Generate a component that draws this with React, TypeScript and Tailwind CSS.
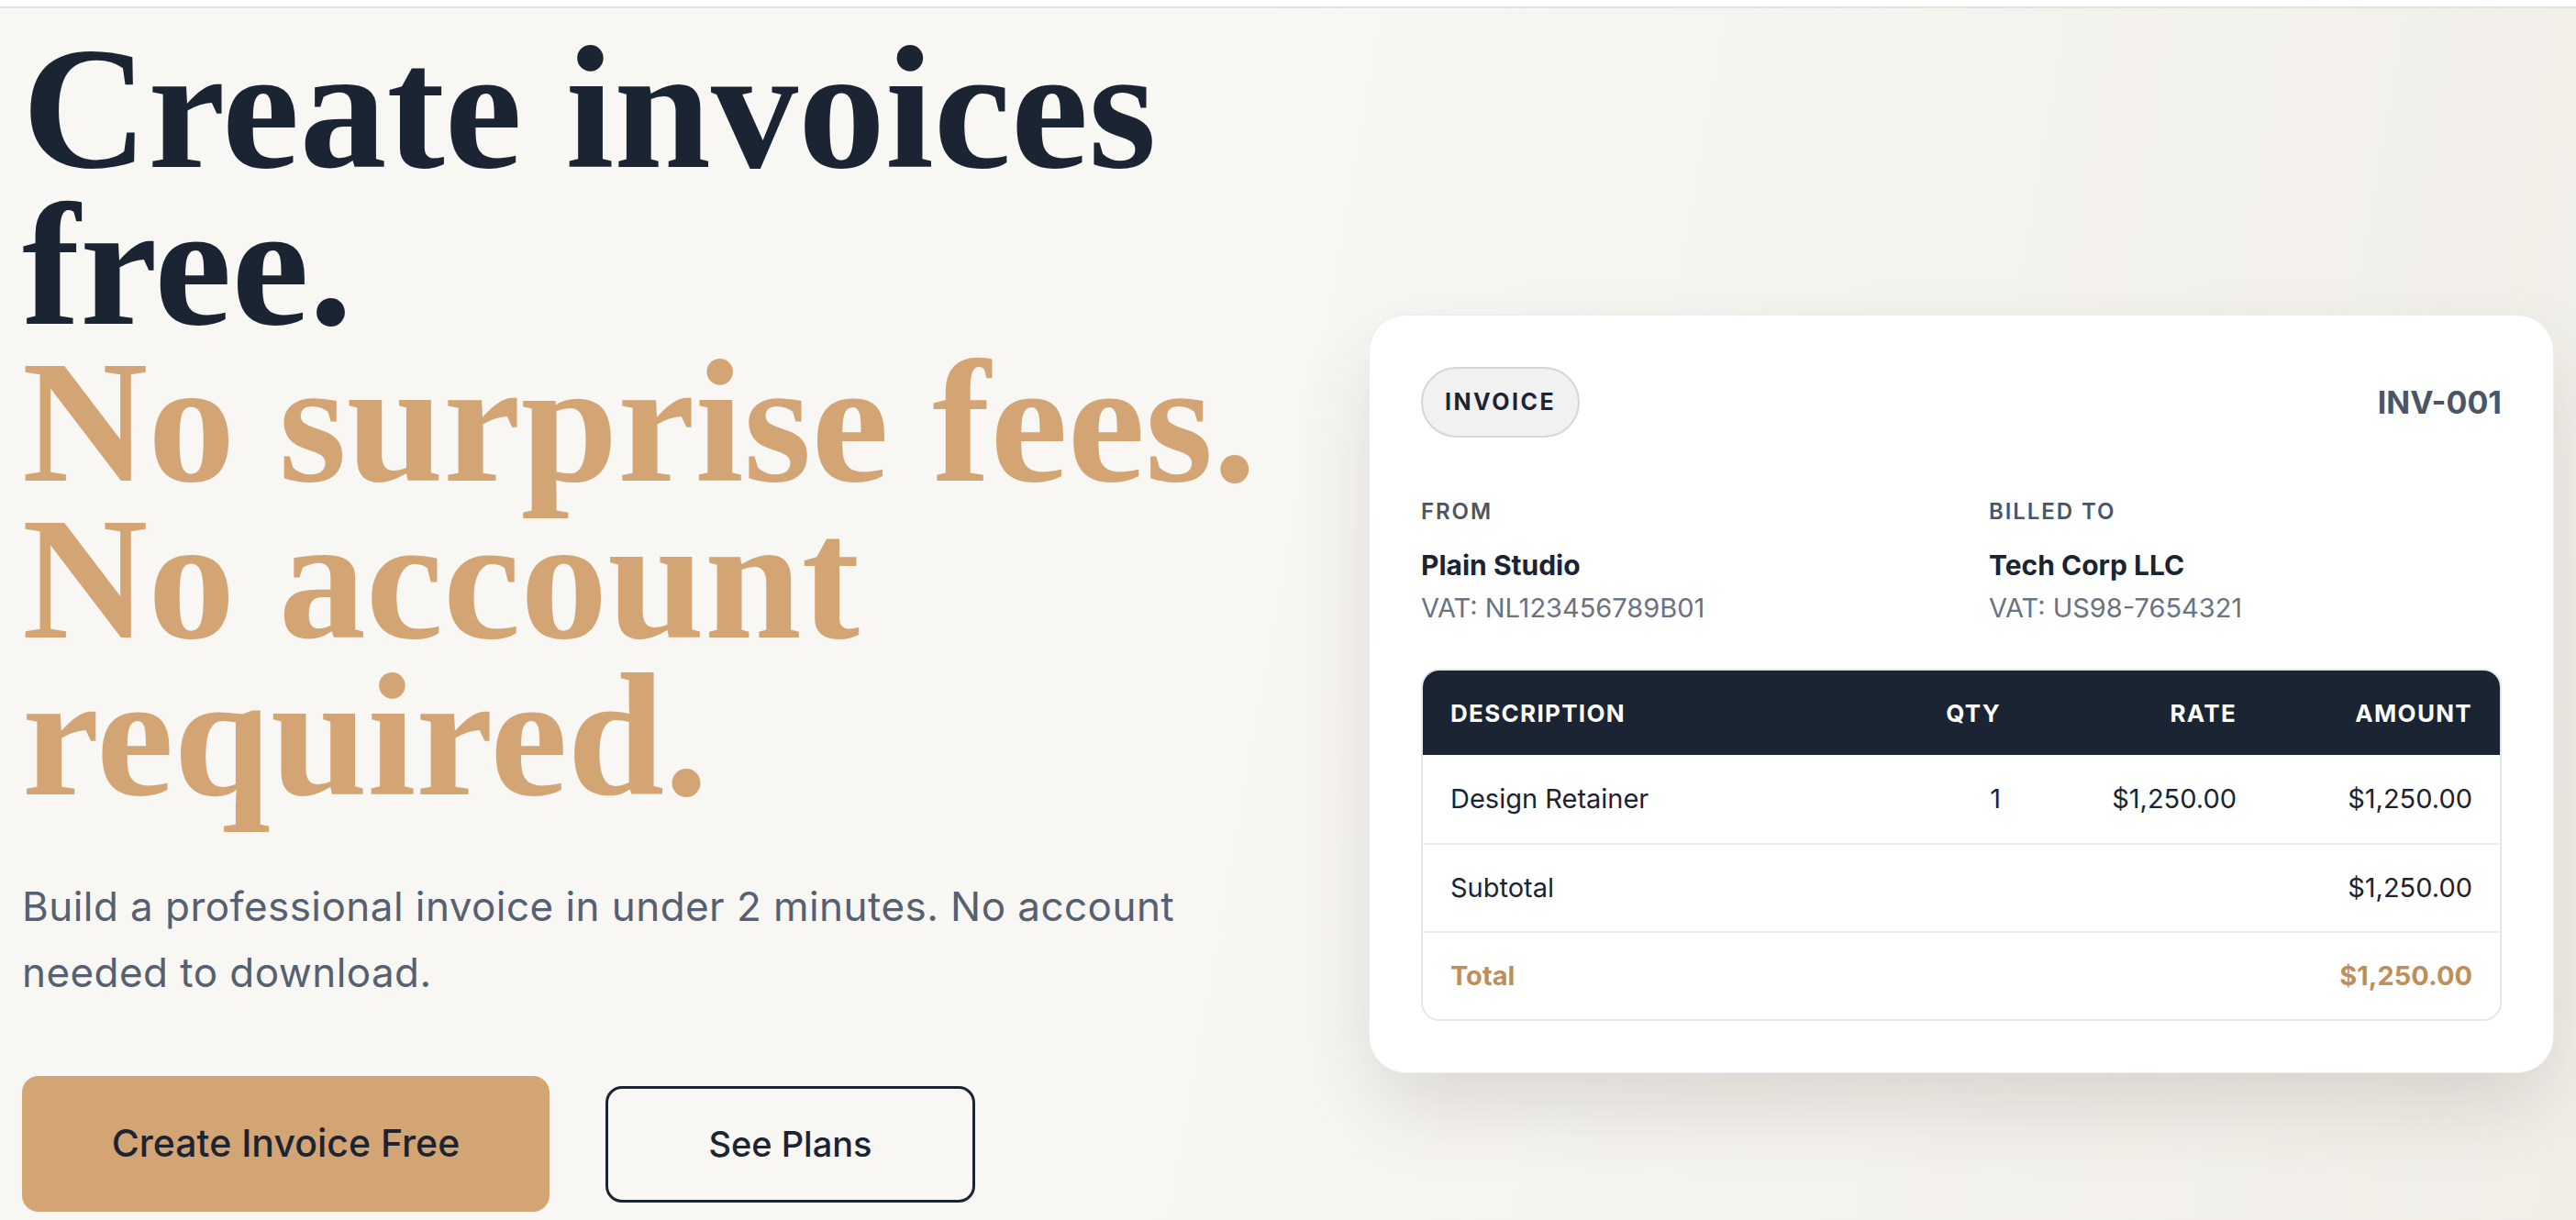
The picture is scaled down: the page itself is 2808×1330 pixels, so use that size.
import React from "react";

const sans = { fontFamily: "Inter, 'Noto Sans', sans-serif" } as const;

function Row({
  cells,
  bold,
  gold,
  border,
}: {
  cells: string[];
  bold?: boolean;
  gold?: boolean;
  border?: boolean;
}) {
  const color = gold ? "text-[#bf8f5a]" : "text-[#1b2433]";
  const weight = bold ? "font-bold" : "font-normal";
  return (
    <div
      className={`grid h-[96px] grid-cols-[1fr_180px_257px_257px] items-center text-[29px] ${color} ${weight} ${
        border ? "border-t-2 border-[#ececec]" : ""
      }`}
    >
      <div className="pl-[30px]">{cells[0]}</div>
      <div className="pr-[30px] text-right">{cells[1]}</div>
      <div className="pr-[30px] text-right">{cells[2]}</div>
      <div className="pr-[30px] text-right">{cells[3]}</div>
    </div>
  );
}

export default function App() {
  return (
    <div
      className="min-h-[1330px] w-full bg-[linear-gradient(100deg,#f8f7f4_45%,#f1eee8_100%)]"
      style={sans}
    >
      <div className="h-[9px] border-b-2 border-[#e3e3dd] bg-white" />
      <div className="flex items-start px-6 pt-6">
        {/* Left column */}
        <div className="flex-1">
          <h1
            className="text-[190px] font-bold leading-[171px] text-[#1b2433]"
            style={{ fontFamily: "'Liberation Serif', 'Times New Roman', serif" }}
          >
            Create invoices
            <br />
            free.
            <br />
            <span className="text-[#d4a574]">
              No surprise fees.
              <br />
              No account
              <br />
              required.
            </span>
          </h1>
          <p className="mt-[64px] text-[44px] leading-[72px] tracking-[0.01em] text-[#556070]">
            Build a professional invoice in under 2 minutes. No account
            <br />
            needed to download.
          </p>
          <div className="mt-[77px] flex items-center gap-[61px]">
            <button className="flex h-[148px] w-[575px] items-center justify-center rounded-[18px] bg-[#d4a574] text-[41px] font-medium text-[#1b2433]">
              Create Invoice Free
            </button>
            <button className="flex h-[127px] w-[403px] items-center justify-center rounded-[18px] border-[3px] border-[#1b2433] text-[38px] font-medium text-[#1b2433]">
              See Plans
            </button>
          </div>
        </div>

        {/* Invoice card */}
        <div className="mt-[310px] w-[1292px] shrink-0 rounded-[40px] border border-[#ececec] bg-white p-14 shadow-[0_40px_90px_-10px_rgba(60,50,40,0.16)]">
          <div className="flex items-center justify-between">
            <div className="flex h-[77px] items-center rounded-full border-2 border-[#d6d6da] bg-[#f1f1f1] px-6 text-[25px] font-bold tracking-[0.1em] text-[#1b2433]">
              INVOICE
            </div>
            <div className="text-[34px] font-bold text-[#4b5563]">INV-001</div>
          </div>

          <div className="mt-[65px] grid grid-cols-2 gap-x-[60px]">
            <div>
              <div className="text-[24px] font-semibold leading-[32px] tracking-[0.08em] text-[#4b5563]">
                FROM
              </div>
              <div className="mt-[22px] text-[30px] font-bold leading-[40px] text-[#1b2433]">
                Plain Studio
              </div>
              <div className="mt-[7px] text-[29px] leading-[40px] text-[#6b7280]">
                VAT: NL123456789B01
              </div>
            </div>
            <div>
              <div className="text-[24px] font-semibold leading-[32px] tracking-[0.08em] text-[#4b5563]">
                BILLED TO
              </div>
              <div className="mt-[22px] text-[30px] font-bold leading-[40px] text-[#1b2433]">
                Tech Corp LLC
              </div>
              <div className="mt-[7px] text-[29px] leading-[40px] text-[#6b7280]">
                VAT: US98-7654321
              </div>
            </div>
          </div>

          <div className="mt-[46px] overflow-hidden rounded-[20px] border-2 border-[#e5e7eb]">
            <div className="grid h-[92px] grid-cols-[1fr_180px_257px_257px] items-center bg-[#1b2433] text-[26px] font-bold tracking-[0.05em] text-white">
              <div className="pl-[30px]">DESCRIPTION</div>
              <div className="pr-[30px] text-right">QTY</div>
              <div className="pr-[30px] text-right">RATE</div>
              <div className="pr-[30px] text-right">AMOUNT</div>
            </div>
            <Row cells={["Design Retainer", "1", "$1,250.00", "$1,250.00"]} />
            <Row cells={["Subtotal", "", "", "$1,250.00"]} border />
            <Row cells={["Total", "", "", "$1,250.00"]} border bold gold />
          </div>
        </div>
      </div>
    </div>
  );
}
